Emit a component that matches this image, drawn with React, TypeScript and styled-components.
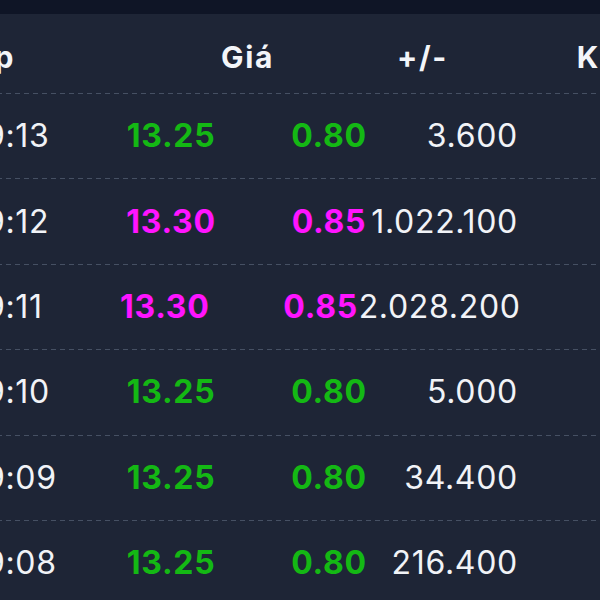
import React from "react";
import styled, { createGlobalStyle } from "styled-components";

const GlobalStyle = createGlobalStyle`
  html, body {
    margin: 0;
    padding: 0;
    background: #1e2536;
  }
  body {
    font-family: Inter, "Noto Sans", "Liberation Sans", sans-serif;
    color: #f1f3f7;
    -webkit-font-smoothing: antialiased;
  }
`;

const Page = styled.div`
  width: 600px;
  height: 600px;
  overflow: hidden;
  background: #1e2536;
  display: flex;
  flex-direction: column;
`;

const TopBar = styled.div`
  flex: 0 0 14px;
  background: #0f1526;
`;

const Viewport = styled.div`
  flex: 1;
  overflow: hidden;
`;

const Table = styled.div`
  width: 838px;
  margin-left: -120px;
  display: flex;
  flex-direction: column;
`;

const HeadRow = styled.div`
  height: 79px;
  box-sizing: border-box;
  padding-top: 6px;
  display: flex;
  align-items: center;
`;

const HeadCell = styled.div<{ $w: number; $align?: string; $pr?: number }>`
  flex: 0 0 ${(p) => p.$w}px;
  text-align: ${(p) => p.$align || "left"};
  padding-right: ${(p) => p.$pr || 0}px;
  box-sizing: border-box;
  font-size: 30px;
  letter-spacing: 1.6px;
  font-weight: 700;
  color: #f3f5f9;
  white-space: nowrap;
`;

const Row = styled.div`
  height: 85.4px;
  display: flex;
  align-items: center;
  background-image: linear-gradient(to right, #465063 55%, transparent 55%);
  background-size: 9px 1px;
  background-repeat: repeat-x;
  background-position: 0 0;
  font-size: 32px;
  letter-spacing: 0.7px;
  white-space: nowrap;
`;

const TimeCell = styled.div`
  flex: 0 2.34 171px;
  min-width: 0;
  padding-left: 39px;
  box-sizing: border-box;
  font-weight: 400;
  color: #f1f3f7;
`;

type Tone = "up" | "ceil";

const toneColor = (t: Tone) => (t === "ceil" ? "#ff14ff" : "#14b814");

const PriceCell = styled.div<{ $tone: Tone }>`
  flex: 0 1.25 240px;
  min-width: 0;
  text-align: center;
  font-weight: 700;
  color: ${(p) => toneColor(p.$tone)};
`;

const ChangeCell = styled.div<{ $tone: Tone }>`
  flex: 0 0 76px;
  text-align: center;
  font-weight: 700;
  color: ${(p) => toneColor(p.$tone)};
`;

const VolumeCell = styled.div`
  flex: 0 0 auto;
  min-width: 151px;
  text-align: right;
  font-weight: 400;
  color: #f1f3f7;
`;

const TailCell = styled.div`
  flex: 0 1 200px;
  min-width: 0;
`;

const rows: { time: string; price: string; change: string; vol: string; tone: Tone }[] = [
  { time: "14:09:13", price: "13.25", change: "0.80", vol: "3.600", tone: "up" },
  { time: "14:09:12", price: "13.30", change: "0.85", vol: "1.022.100", tone: "ceil" },
  { time: "14:09:11", price: "13.30", change: "0.85", vol: "2.028.200", tone: "ceil" },
  { time: "14:09:10", price: "13.25", change: "0.80", vol: "5.000", tone: "up" },
  { time: "14:09:09", price: "13.25", change: "0.80", vol: "34.400", tone: "up" },
  { time: "14:09:08", price: "13.25", change: "0.80", vol: "216.400", tone: "up" },
];

export default function App() {
  return (
    <>
      <GlobalStyle />
      <Page>
        <TopBar />
        <Viewport>
          <Table>
            <HeadRow>
              <HeadCell $w={280} $align="right" $pr={145}>Khớp</HeadCell>
              <HeadCell $w={175} $align="center">Giá</HeadCell>
              <HeadCell $w={175} $align="center">+/-</HeadCell>
              <HeadCell $w={175} $align="center">KL</HeadCell>
            </HeadRow>
            {rows.map((r, i) => (
              <Row key={i}>
                <TimeCell>{r.time}</TimeCell>
                <PriceCell $tone={r.tone}>{r.price}</PriceCell>
                <ChangeCell $tone={r.tone}>{r.change}</ChangeCell>
                <VolumeCell>{r.vol}</VolumeCell>
                <TailCell />
              </Row>
            ))}
          </Table>
        </Viewport>
      </Page>
    </>
  );
}
